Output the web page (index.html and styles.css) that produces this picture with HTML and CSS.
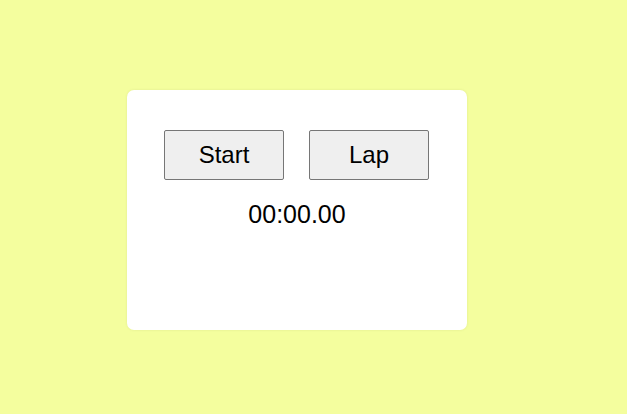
FILE: index.html
```html
<!DOCTYPE html>
<html>
<head>
<meta charset="utf-8">
<link rel="stylesheet" href="styles.css">
</head>
<body>
<div class="card">
  <div class="buttons">
    <button class="btn">Start</button>
    <button class="btn">Lap</button>
  </div>
  <div class="time">00:00.00</div>
</div>
</body>
</html>
```
FILE: styles.css
```css
html, body {
  margin: 0;
  padding: 0;
}
body {
  background: #f4fe9e;
  width: 627px;
  height: 414px;
  font-family: "Liberation Sans", Arial, sans-serif;
  padding: 90px 0 0 127px;
  box-sizing: border-box;
}
.card {
  width: 340px;
  height: 240px;
  background: #fff;
  border-radius: 7px;
  box-shadow: 0 0 3px rgba(0,0,0,0.08);
  padding-top: 40px;
  box-sizing: border-box;
  display: flex;
  flex-direction: column;
  align-items: center;
}
.buttons {
  display: flex;
  gap: 25px;
  margin-right: 1px;
}
.btn {
  width: 120px;
  height: 50px;
  font-family: "Liberation Sans", Arial, sans-serif;
  font-size: 24px;
  color: #000;
  background: #efefef;
  border: 1px solid #767676;
  border-radius: 2px;
  padding: 0;
}
.time {
  margin-top: 20px;
  font-size: 25px;
  line-height: 29px;
  color: #000;
}
```
